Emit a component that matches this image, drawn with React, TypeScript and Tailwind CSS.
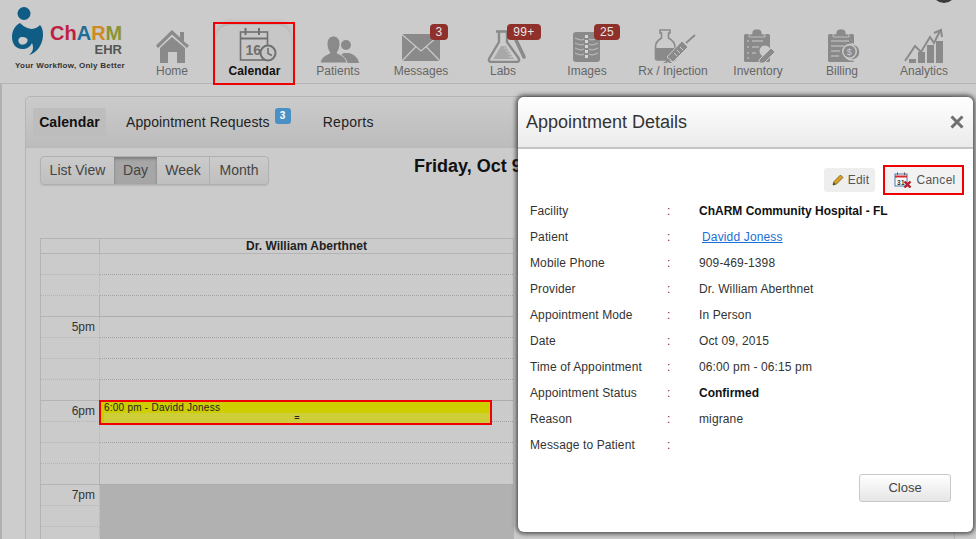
import React from "react";

const G = "#8a8a8a";
const L = "#cbcbcb";

const icons: Record<string, React.ReactNode> = {
  Home: (
    <g fill={G}>
      <path d="M14 18.5 L30 3 L38 10.5 V5 H42 V14.5 L47 18.5 L45 21 L30 7.5 L16 21Z" />
      <path d="M18 21 L30 10 L43 21 V36 H35 V25 H26 V36 H18Z" />
    </g>
  ),
  Calendar: (
    <g fill="none" stroke="#707070" strokeWidth="1.6">
      <rect x="16.5" y="5" width="27" height="28" />
      <path d="M16.5 11.5 H43.5" strokeWidth="2" />
      <path d="M21.5 1 V8 M35 1 V8" strokeWidth="2" />
      <text x="21.5" y="28" fontSize="14" fontWeight="700" fill="#707070" stroke="none" fontFamily="Liberation Sans">16</text>
      <circle cx="44" cy="26" r="7.5" fill="#c6c6c6" strokeWidth="2" />
      <path d="M44 21 V26.5 L48 28.5" />
    </g>
  ),
  Patients: (
    <g fill={G}>
      <circle cx="38" cy="18" r="5" />
      <path d="M31 36 C31 30 33 27 36 26 H41 C45 27 50 30 51 36Z" />
      <path d="M12 36 C13 30 18 28 22 26 C20 23 19 20 19 17 C19 12 22 9 25.5 9 C29 9 32 12 32 17 C32 20 31 23 29 26 C33 28 38 30 39 36Z" stroke={L} strokeWidth="1" />
    </g>
  ),
  Messages: (
    <g>
      <rect x="11" y="7" width="38" height="27" fill={G} />
      <path d="M11 7.5 L30 24 L49 7.5 M11 34 L24.5 20 M49 34 L35.5 20" fill="none" stroke={L} strokeWidth="1.1" />
    </g>
  ),
  Labs: (
    <g>
      <path d="M43 13 L51 30" stroke={G} strokeWidth="3.6" strokeLinecap="round" fill="none" />
      <path d="M23 4.5 H36 M26 4.5 V15 L16.5 31 C15 33.5 16.5 35 18.5 35 H43.5 C45.5 35 47 33.5 45.5 31 L34 15 V4.5" fill={L} stroke={G} strokeWidth="2.4" />
      <path d="M21.5 30 L28 19 H33 L41 32 H20Z" fill="#a8a8a8" />
      <path d="M31 21 H35 M33 24 H37 M35 27 H39 M36 30 H41" stroke={L} strokeWidth="1" />
    </g>
  ),
  Images: (
    <g>
      <rect x="16" y="5" width="27" height="30" rx="3" fill={G} />
      <path d="M18 11 Q24 14 27 12 M18 16 Q24 19 27 17 M18 21 Q24 24 27 22 M18 26 Q24 29 27 27 M41 11 Q35 14 32 12 M41 16 Q35 19 32 17 M41 21 Q35 24 32 22 M41 26 Q35 29 32 27" fill="none" stroke="#b5b5b5" strokeWidth="1.3" />
      <path d="M29.5 8 V33" stroke="#d5d5d5" strokeWidth="3" strokeDasharray="3 2" />
    </g>
  ),
  "Rx / Injection": (
    <g>
      <path d="M17 3 H27 V6 H25.5 V11 C29 13 32 16 32 20 V33 H14 Q12.5 33 12.5 31 V20 C12.5 16 15 13 18.5 11 V6 H17Z" fill={L} stroke={G} strokeWidth="1.6" />
      <path d="M13 21 H31.5 V33 H14 Q13 33 13 31Z" fill={G} />
      <path d="M24 30 L39 14 L45 20 L30 35Z" fill={G} stroke={L} strokeWidth="1" />
      <path d="M21 30 L30 38 M25 34 L20 37 M43 16 L52 8" stroke={G} strokeWidth="1.8" />
      <path d="M31 26 L34 29 M34 23 L37 26 M37 20 L40 23" stroke={L} strokeWidth="1" />
    </g>
  ),
  Inventory: (
    <g>
      <rect x="16" y="7" width="26" height="28" rx="1.5" fill={G} />
      <path d="M24 7 C24 3 26 2 29 2 C32 2 34 3 34 7 H37 V10 H21 V7Z" fill={G} stroke={L} strokeWidth="0.8" />
      <path d="M19 14 H21 M24 14 H35 M19 20 H21 M24 20 H31 M19 26 H21 M24 26 H28 M19 31 H21" stroke={L} strokeWidth="1.2" />
      <circle cx="37" cy="24" r="5.5" fill={L} />
      <path d="M31 33 L43 21 L47 25 L36 36 H31Z" fill={G} stroke={L} strokeWidth="1" />
    </g>
  ),
  Billing: (
    <g>
      <rect x="16" y="7" width="26" height="28" rx="1.5" fill={G} />
      <path d="M24 7 C24 3 26 2 29 2 C32 2 34 3 34 7 H37 V10 H21 V7Z" fill={G} stroke={L} strokeWidth="0.8" />
      <path d="M19 14 H37 M19 19 H32 M19 24 H28 M19 29 H27" stroke={L} strokeWidth="1.1" />
      <circle cx="40" cy="25" r="8" fill={G} stroke={L} strokeWidth="1.4" />
      <circle cx="37.5" cy="24.5" r="7.5" fill={L} />
      <circle cx="37.5" cy="24.5" r="6" fill={G} />
      <text x="34.7" y="28" fontSize="9" fill={L} fontFamily="Liberation Sans">$</text>
    </g>
  ),
  Analytics: (
    <g>
      <path d="M15 32 H22 V36 H15Z M24 25 H31 V36 H24Z M33 18 H40 V36 H33Z M42 14 H49 V36 H42Z" fill={G} />
      <path d="M11 34 L21 19 L27 25 L36 10 L40 16 L46 4" fill="none" stroke={G} strokeWidth="2" />
      <path d="M40 6 L47 3 L48 10" fill="none" stroke={G} strokeWidth="2" />
    </g>
  ),
};

const nav: { name: string; w: string; badge?: string; badgeClass?: string }[] = [
  { name: "Home", w: "w-[84px]" },
  { name: "Calendar", w: "w-[80px]" },
  { name: "Patients", w: "w-[88px]" },
  { name: "Messages", w: "w-[78px]", badge: "3", badgeClass: "left-[48px] w-[18px]" },
  { name: "Labs", w: "w-[86px]", badge: "99+", badgeClass: "left-[47px] w-[34px]" },
  { name: "Images", w: "w-[82px]", badge: "25", badgeClass: "left-[48px] w-[26px]" },
  { name: "Rx / Injection", w: "w-[90px]" },
  { name: "Inventory", w: "w-[80px]" },
  { name: "Billing", w: "w-[88px]" },
  { name: "Analytics", w: "w-[76px]" },
];

function NavItem({ item }: { item: (typeof nav)[number] }) {
  const active = item.name === "Calendar";
  return (
    <div className={`relative ${item.w} h-[83px] flex flex-col items-center pt-[27px] shrink-0`}>
      {active && (
        <>
          <div className="absolute left-[2px] right-[3px] top-[25px] bottom-0 rounded-t-[14px] bg-[#c7c7c7] shadow-[0_-3px_5px_rgba(0,0,0,0.12)]" />
          <div className="absolute left-[-1px] right-[-1px] top-[22px] bottom-[-2px] border-[2px] border-[#f00000] z-10" />
        </>
      )}
      <svg viewBox="0 0 60 36" className="relative w-[60px] h-[36px] shrink-0">
        {icons[item.name]}
      </svg>
      <span
        className={`relative mt-[1px] text-[12px] leading-[14px] whitespace-nowrap ${
          active ? "font-bold text-[#111] tracking-[0.1px] ml-[1px]" : "text-[#666666]"
        }`}
      >
        {item.name}
      </span>
      {item.badge && (
        <span
          className={`absolute top-[24px] h-[16px] rounded-[4px] bg-[#8f302b] text-[#e6e6e6] text-[12px] leading-[16px] text-center tracking-[0.3px] ${item.badgeClass}`}
        >
          {item.badge}
        </span>
      )}
    </div>
  );
}

function Logo() {
  return (
    <div className="w-[130px] h-[83px] shrink-0 pl-[12px] pt-[6px]">
      <div className="flex h-[52px]">
        <svg viewBox="0 0 36 50" className="w-[36px] h-[50px] shrink-0">
          <circle cx="12" cy="7.5" r="6.5" fill="#0f5c85" />
          <path
            fillRule="evenodd"
            fill="#0f5c85"
            d="M8 17 C2 20 0 26 0 31 C0 38 4 43 10 43 C15 43 18 41 20 37 C22 42 21 46 17 49 C25 47 31 38 31 29 C31 24 30 21 28 19 C24 24 16 25 8 17Z M10.5 31 C7.5 31 6 33 6.5 35.5 C7 38 9 39 11.5 38.5 C14.5 38 16 35.5 15.5 33.5 C15 32 13 31 10.5 31Z"
          />
        </svg>
        <div className="ml-[2px] w-[74px] flex flex-col items-end pt-[18px]">
          <div className="text-[20px] leading-[19px] font-bold w-full whitespace-nowrap">
            <span className="text-[#bf1f45]">Ch</span>
            <span className="text-[#1f6d96]">A</span>
            <span className="text-[#cf8a25]">R</span>
            <span className="text-[#8c9433]">M</span>
          </div>
          <div className="text-[13px] leading-[14px] font-bold text-[#555] mr-[2px]">EHR</div>
        </div>
      </div>
      <div className="ml-[3px] mt-[3px] text-[8px] leading-[10px] font-bold text-[#333] whitespace-nowrap tracking-[0.27px]">
        Your Workflow, Only Better
      </div>
    </div>
  );
}

const slots: { label?: string; end?: boolean; off?: boolean }[] = [
  {}, {}, { end: true },
  { label: "5pm" }, {}, {}, { end: true },
  { label: "6pm" }, {}, {}, { end: true },
  { label: "7pm", off: true }, { off: true }, { off: true },
];

function Slot({ s }: { s: (typeof slots)[number] }) {
  const line = s.end ? "border-b border-solid border-[#adadad]" : "border-b border-dotted border-[#a3a3a3]";
  return (
    <div className="flex h-[21px] relative">
      <div className={`w-[59px] shrink-0 box-border border-r border-[#b4b4b4] text-right pr-[4px] text-[12px] leading-[20px] text-[#333] ${line}`}>
        {s.label}
      </div>
      <div className={`flex-1 box-border ${s.off ? "bg-[#b1b1b1]" : line}`} />
      {s.label === "6pm" && (
        <div className="absolute left-[58px] top-[-1px] w-[393px] h-[25px] box-border border-[2px] border-[#f00000] bg-[#cdcd00] z-10 pl-[3px] text-[10px] leading-[11px] text-[#222]">
          <div className="h-[11px] tracking-[0.24px]">6:00 pm - Davidd Joness</div>
          <div className="h-[10px] bg-[#cece38] text-center text-[9px] leading-[10px] font-bold">=</div>
        </div>
      )}
    </div>
  );
}

const details: [string, string, string?][] = [
  ["Facility", "ChARM Community Hospital - FL", "bold"],
  ["Patient", "Davidd Joness", "link"],
  ["Mobile Phone", "909-469-1398"],
  ["Provider", "Dr. William Aberthnet"],
  ["Appointment Mode", "In Person"],
  ["Date", "Oct 09, 2015"],
  ["Time of Appointment", "06:00 pm - 06:15 pm"],
  ["Appointment Status", "Confirmed", "bold"],
  ["Reason", "migrane"],
  ["Message to Patient", ""],
];

function Modal() {
  return (
    <div className="absolute left-[518px] top-[97px] w-[455px] h-[435px] bg-white rounded-[6px] shadow-[0_0_4px_2px_rgba(40,40,40,0.75)] z-20 flex flex-col">
      <div className="h-[52px] shrink-0 box-border border-b-2 border-[#c4c4c4] rounded-t-[6px] bg-gradient-to-b from-white to-[#ebebeb] flex items-center justify-between pl-[8px] pr-[9px]">
        <span className="text-[18px] text-[#333]">Appointment Details</span>
        <svg viewBox="0 0 14 14" className="w-[14px] h-[14px]">
          <path d="M1.5 1.5 L12.5 12.5 M12.5 1.5 L1.5 12.5" stroke="#6f6f6f" strokeWidth="3" />
        </svg>
      </div>
      <div className="flex justify-end items-center gap-[8px] pr-[9px] pt-[16px] h-[30px] box-content shrink-0">
        <div className="w-[51px] h-[24px] rounded-[3px] bg-[#eeeeee] flex items-center justify-center gap-[4px] text-[12px] text-[#555] tracking-[0.2px] pl-[2px]">
          <svg viewBox="0 0 12 12" className="w-[12px] h-[12px]">
            <path d="M1 11 L2 7.5 L8.5 1 L11 3.5 L4.5 10Z" fill="#d9a021" stroke="#6b5a20" strokeWidth="0.8" />
            <path d="M1 11 L1.8 8.5 L3.5 10.2Z" fill="#333" />
          </svg>
          Edit
        </div>
        <div className="w-[81px] h-[30px] box-border border-[2px] border-[#f00000] flex items-center justify-center gap-[4px] text-[12px] text-[#555] bg-[#f2f2f2] tracking-[0.3px] pl-[3px]">
          <svg viewBox="0 0 18 16" className="w-[18px] h-[16px] shrink-0">
            <rect x="1" y="2" width="12" height="12" fill="white" stroke="#4f7ba8" strokeWidth="1" />
            <rect x="1" y="3.5" width="12" height="2" fill="#d22b2b" />
            <path d="M3.5 0.5 V3 M10.5 0.5 V3" stroke="#555" strokeWidth="1" />
            <text x="3" y="12.5" fontSize="6.5" fontWeight="700" fill="#333" fontFamily="Liberation Sans">31</text>
            <path d="M10.5 9.5 L16.5 15.5 M16.5 9.5 L10.5 15.5" stroke="#b3202a" strokeWidth="2.4" />
          </svg>
          Cancel
        </div>
      </div>
      <div className="pt-[3px] pl-[12px] text-[12px] text-[#333]">
        {details.map(([k, v, t]) => (
          <div key={k} className="flex h-[26px] items-center">
            <span className="w-[137px] shrink-0 tracking-[0.12px]">{k}</span>
            <span className="w-[32px] shrink-0 text-[#7a1f4a]">:</span>
            {t === "link" ? (
              <a className="ml-[3px] text-[#1a6fd6] underline tracking-[0.15px]">{v}</a>
            ) : (
              <span className={t === "bold" ? "font-bold text-[#111]" : "tracking-[0.12px]"}>{v}</span>
            )}
          </div>
        ))}
      </div>
      <div className="flex justify-end pr-[22px] pt-[16px]">
        <div className="w-[92px] h-[28px] box-border border border-[#c8c8c8] rounded-[3px] bg-gradient-to-b from-white to-[#e6e6e6] text-center text-[13px] leading-[26px] text-[#444]">
          Close
        </div>
      </div>
    </div>
  );
}

export default function App() {
  return (
    <div className="relative w-[976px] h-[539px] overflow-hidden bg-[#cbcbcb] font-['Liberation_Sans',Arial,sans-serif]">
      <div className="absolute left-[932px] top-[-22px] w-[24px] h-[25px] rounded-full bg-[#3a3a3a]" />
      <header className="flex h-[84px] box-border border-b border-[#b5b5b5]">
        <Logo />
        {nav.map((n) => (
          <NavItem key={n.name} item={n} />
        ))}
      </header>
      <main className="h-[455px] box-border border-l-2 border-[#b0b0b0] bg-[#cdcdcd] pl-[23px] pt-[12px] overflow-hidden">
        <section className="w-[930px] box-border border border-[#b5b5b5] rounded-t-[5px] bg-[#cbcbcb] h-[460px]">
          <div className="h-[51px] box-border border-b border-[#b9b9b9] bg-gradient-to-b from-[#cbcbcb] to-[#bcbcbc] flex items-center pl-[7px] text-[14px] text-[#222] rounded-t-[5px]">
            <span className="w-[73px] h-[28px] rounded-[3px] bg-[#bdbdbd] text-center leading-[28px] font-bold text-[#111] tracking-[0.1px]">Calendar</span>
            <span className="ml-[20px] tracking-[0.1px]">Appointment Requests</span>
            <span className="ml-[5px] mb-[12px] w-[16px] h-[16px] rounded-[3px] bg-[#4a90c4] text-white text-[10px] leading-[16px] text-center font-bold">3</span>
            <span className="ml-[32px] tracking-[0.3px]">Reports</span>
          </div>
          <div className="flex h-[90px] pl-[14px] pt-[8px]">
            <div className="flex h-[29px] box-border border border-[#b0b0b0] rounded-[4px] bg-gradient-to-b from-[#cbcbcb] to-[#bfbfbf] text-[14px] leading-[27px] text-[#444] shadow-[0_1px_1px_rgba(0,0,0,0.1)]">
              <span className="w-[73px] text-center">List View</span>
              <span className="w-[43px] text-center bg-[#a6a6a6] shadow-[inset_0_2px_3px_rgba(0,0,0,0.25)]">Day</span>
              <span className="w-[53px] text-center border-r border-[#b0b0b0]">Week</span>
              <span className="w-[58px] text-center">Month</span>
            </div>
            <div className="ml-[145px] text-[18px] leading-[20px] font-bold text-[#111] whitespace-nowrap">
              Friday, Oct 9, 2015
            </div>
          </div>
          <div className="ml-[14px] w-[474px] border-l border-r border-[#b4b4b4]">
            <div className="flex h-[16px] box-border border-t border-b border-[#b4b4b4] text-[12px] leading-[14px] font-bold text-[#222]">
              <div className="w-[59px] shrink-0 border-r border-[#b4b4b4]" />
              <div className="flex-1 text-center">Dr. William Aberthnet</div>
            </div>
            {slots.map((s, i) => (
              <Slot key={i} s={s} />
            ))}
          </div>
        </section>
      </main>
      <Modal />
    </div>
  );
}
